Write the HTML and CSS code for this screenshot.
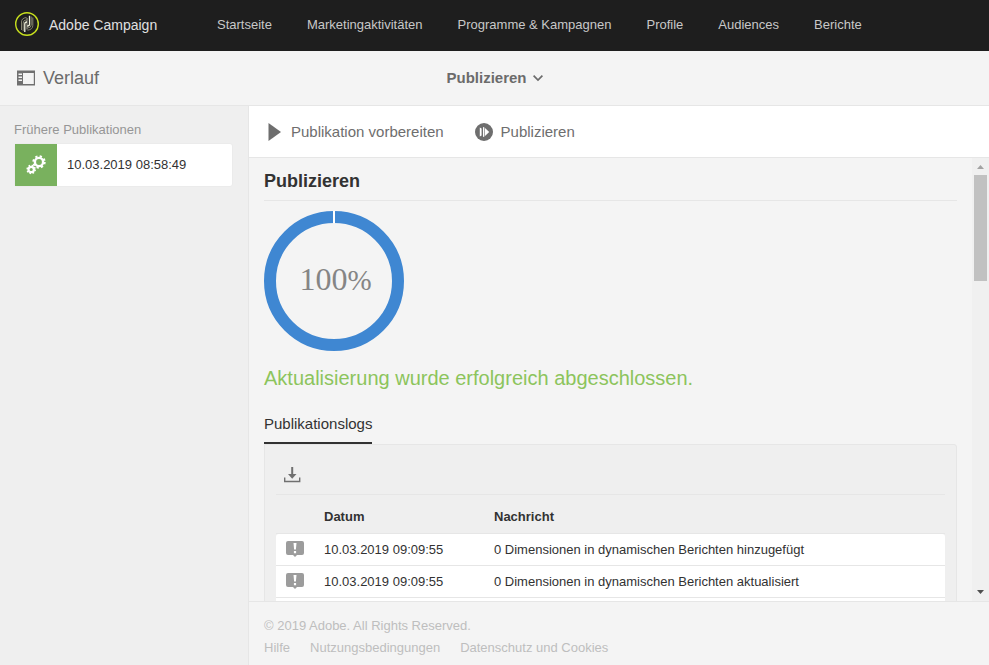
FILE: index.html
```
<!DOCTYPE html>
<html lang="de">
<head>
<meta charset="utf-8">
<title>Adobe Campaign</title>
<link rel="stylesheet" href="styles.css">
</head>
<body>
<header class="topbar">
  <a class="brand" href="#">
    <svg class="logo" viewBox="0 0 24 24" aria-hidden="true">
      <circle cx="12" cy="12" r="11.3" fill="none" stroke="#c8e01e" stroke-width="1.4"/>
      <g fill="none" stroke="#85856f" stroke-width="1">
        <path d="M6.500 18V10Q6.500 6 11.500 5.500M8.200 19V11Q8.200 8 11.500 7.800M17.800 5.500V13.500Q17.800 17.500 12.500 18.200M16.200 4.500V13Q16.200 15.800 12.500 16"/>
        <path d="M12 6V17.500" stroke="#a8a894"/>
      </g>
      <path d="M9.800 20V12Q9.800 10 12 10M14.500 3.800V12.300Q14.500 14 12.200 14" fill="none" stroke="#f2f2dc" stroke-width="1.300"/>
    </svg>
    <span>Adobe Campaign</span>
  </a>
  <nav class="mainnav">
    <a href="#">Startseite</a>
    <a href="#">Marketingaktivitäten</a>
    <a href="#">Programme &amp; Kampagnen</a>
    <a href="#">Profile</a>
    <a href="#">Audiences</a>
    <a href="#">Berichte</a>
  </nav>
</header>

<div class="subbar">
  <button class="history" type="button">
    <svg class="rail-icon" viewBox="0 0 18 16" aria-hidden="true">
      <path fill="#707070" fill-rule="evenodd" d="M0 0.500H18V15.500H0ZM6 3V14H16.800V3ZM1.500 3.500V5H5V3.500ZM1.500 6.500V8H5V6.500ZM1.500 9.500V11H5V9.500Z"/>
    </svg>
    <span>Verlauf</span>
  </button>
  <button class="title-menu" type="button">
    <span>Publizieren</span>
    <svg class="chevron" viewBox="0 0 10 8" aria-hidden="true"><path d="M0.600 1.700L5 6L9.400 1.700" fill="none" stroke="#6b6b6b" stroke-width="1.700"/></svg>
  </button>
</div>

<div class="workspace">
  <aside class="sidebar">
    <h2 class="sidebar-title">Frühere Publikationen</h2>
    <a class="history-card" href="#">
      <span class="history-badge">
        <svg class="gears" viewBox="0 0 20 20" aria-hidden="true">
          <g fill="none" stroke="#fff">
            <circle cx="13" cy="7" r="4.100" stroke-width="2.400"/>
            <circle cx="13" cy="7" r="5.700" stroke-width="2" stroke-dasharray="2.240 2.237"/>
            <circle cx="5.200" cy="14.500" r="2.700" stroke-width="2.200"/>
            <circle cx="5.200" cy="14.500" r="4" stroke-width="1.600" stroke-dasharray="1.570 1.570"/>
          </g>
        </svg>
      </span>
      <span class="history-date">10.03.2019 08:58:49</span>
    </a>
  </aside>

  <section class="main">
    <div class="toolbar">
      <button class="action" type="button">
        <svg class="action-icon" viewBox="0 0 18 18" aria-hidden="true"><path d="M3.500 0L16 9L3.500 18Z" fill="#6e6e6e"/></svg>
        <span>Publikation vorbereiten</span>
      </button>
      <button class="action" type="button">
        <svg class="action-icon" viewBox="0 0 18 18" aria-hidden="true">
          <circle cx="9" cy="9" r="9" fill="#6e6e6e"/>
          <path d="M4.800 4.500L6.600 5.500V12.500L4.800 13.500ZM8 4L9.400 4.500V13.500L8 14ZM10 5L14.200 9L10 13Z" fill="#fff"/>
        </svg>
        <span>Publizieren</span>
      </button>
    </div>

    <div class="scroller">
      <main class="content">
        <h1 class="heading">Publizieren</h1>
        <div class="progress">
          <svg class="ring" viewBox="0 0 140 140" aria-hidden="true">
            <circle cx="70" cy="70" r="64" fill="none" stroke="#3f87d2" stroke-width="12"/>
            <path d="M70 0V12" stroke="#fff" stroke-width="2"/>
          </svg>
          <div class="percent">100<span class="percent-sign">%</span></div>
        </div>
        <p class="success">Aktualisierung wurde erfolgreich abgeschlossen.</p>
        <div class="tabs"><button class="tab" type="button">Publikationslogs</button></div>
        <div class="panel">
          <div class="panel-tools">
            <button class="download" type="button" aria-label="Herunterladen">
              <svg class="download-icon" viewBox="0 0 18 16" aria-hidden="true">
                <path d="M1.700 10.500V14.500H16.700V10.500" fill="none" stroke="#707070" stroke-width="1.400"/>
                <path d="M8.200 0H10.200V7H13.500L9.200 11.800L5 7H8.200Z" fill="#707070"/>
              </svg>
            </button>
          </div>
          <table class="logs">
            <thead>
              <tr><th class="col-icon"></th><th class="col-date">Datum</th><th>Nachricht</th></tr>
            </thead>
            <tbody>
              <tr>
                <td class="col-icon"><svg class="note" viewBox="0 0 18 16" aria-hidden="true"><path d="M2 0H16Q18 0 18 2V12Q18 14 16 14H11L9 16L7 14H2Q0 14 0 12V2Q0 0 2 0Z" fill="#9c9c9c"/><path d="M7.500 2H10.500L9.900 8.500H8.100ZM7.900 10H10.100V12.200H7.900Z" fill="#fff"/></svg></td>
                <td>10.03.2019 09:09:55</td><td>0 Dimensionen in dynamischen Berichten hinzugefügt</td>
              </tr>
              <tr>
                <td class="col-icon"><svg class="note" viewBox="0 0 18 16" aria-hidden="true"><path d="M2 0H16Q18 0 18 2V12Q18 14 16 14H11L9 16L7 14H2Q0 14 0 12V2Q0 0 2 0Z" fill="#9c9c9c"/><path d="M7.500 2H10.500L9.900 8.500H8.100ZM7.900 10H10.100V12.200H7.900Z" fill="#fff"/></svg></td>
                <td>10.03.2019 09:09:55</td><td>0 Dimensionen in dynamischen Berichten aktualisiert</td>
              </tr>
              <tr><td class="col-icon"></td><td></td><td></td></tr>
            </tbody>
          </table>
        </div>
      </main>
      <div class="scrollbar" aria-hidden="true">
        <svg class="arrow" viewBox="0 0 17 17"><path d="M5 11L8.500 7L12 11Z" fill="#a3a3a3"/></svg>
        <div class="track"><div class="thumb"></div></div>
        <svg class="arrow" viewBox="0 0 17 17"><path d="M5 6L8.500 10L12 6Z" fill="#505050"/></svg>
      </div>
    </div>

    <footer class="footer">
      <p>© 2019 Adobe. All Rights Reserved.</p>
      <nav class="footer-links">
        <a href="#">Hilfe</a>
        <a href="#">Nutzungsbedingungen</a>
        <a href="#">Datenschutz und Cookies</a>
      </nav>
    </footer>
  </section>
</div>
</body>
</html>
```
FILE: styles.css
```
* { box-sizing: border-box; }

body {
  margin: 0;
  height: 100vh;
  display: flex;
  flex-direction: column;
  overflow: hidden;
  background: #f4f4f4;
  color: #323232;
  font: 13px/22px "Liberation Sans", Arial, sans-serif;
}

a { color: inherit; text-decoration: none; }
button { margin: 0; padding: 0; border: 0; background: none; color: inherit; font: inherit; cursor: pointer; }
svg { display: block; flex: none; }
h1, h2, p { margin: 0; }

.topbar {
  flex: none;
  display: flex;
  align-items: center;
  height: 51px;
  padding: 0 15px 1px;
  background: #1e1e1e;
  color: #c8c8c8;
}
.brand { display: flex; align-items: center; gap: 10px; width: 202px; color: #e0e0e0; font-size: 14px; }
.logo { width: 24px; height: 24px; margin-bottom: 2px; }
.mainnav { display: flex; gap: 35px; white-space: nowrap; }

.subbar {
  flex: none;
  display: grid;
  grid-template-columns: 1fr auto 1fr;
  align-items: center;
  height: 55px;
  padding: 0 17px;
  border-bottom: 1px solid #e6e6e6;
  color: #6b6b6b;
}
.history { display: flex; align-items: center; gap: 8px; font-size: 18px; }
.rail-icon { width: 18px; height: 16px; }
.title-menu { display: flex; align-items: center; gap: 6px; font-size: 15px; font-weight: bold; }
.chevron { width: 10px; height: 8px; }

.workspace { flex: 1; min-height: 0; display: flex; }

.sidebar {
  flex: none;
  width: 249px;
  padding: 13px 15px 0 14px;
  background: #efefef;
  border-right: 1px solid #e6e6e6;
}
.sidebar-title { color: #969696; font-size: 13px; font-weight: normal; }
.history-card {
  display: flex;
  align-items: center;
  margin-top: 2px;
  background: #fff;
  border: 1px solid #ebebeb;
  border-radius: 3px;
}
.history-badge { display: grid; place-items: center; width: 42px; height: 42px; background: #79b15e; }
.gears { width: 20px; height: 20px; }
.history-date { padding-left: 10px; }

.main { flex: 1; min-width: 0; display: flex; flex-direction: column; }

.toolbar {
  flex: none;
  display: flex;
  align-items: center;
  gap: 31px;
  height: 52px;
  padding: 0 16px;
  background: #fff;
  border-bottom: 1px solid #e6e6e6;
  color: #6e6e6e;
}
.action { display: flex; align-items: center; gap: 8px; font-size: 15px; }
.action-icon { width: 18px; height: 18px; }

.scroller { flex: 1; min-height: 0; display: flex; overflow: hidden; }
.content { flex: 1; min-width: 0; padding: 0 15px; }
.heading { height: 43px; border-bottom: 1px solid #e6e6e6; font-size: 18px; line-height: 46px; }

.progress { display: grid; width: 140px; margin-top: 10px; place-items: center; }
.ring, .percent { grid-area: 1 / 1; }
.ring { width: 140px; height: 140px; }
.percent { padding: 0 0 4px 3px; color: #858585; font: 32px/36px "Liberation Serif", "Times New Roman", serif; }
.percent-sign { font-size: 29px; }

.success { margin-top: 12px; color: #8cc45c; font-size: 20px; line-height: 30px; }

.tabs { display: flex; margin-top: 19px; }
.tab { height: 32px; padding-bottom: 6px; border-bottom: 2px solid #323232; font-size: 15px; }

.panel { padding: 0 11px; background: #efefef; border: 1px solid #e6e6e6; border-radius: 0 3px 0 0; }
.panel-tools { display: flex; align-items: center; height: 50px; padding: 10px 7px 0; border-bottom: 1px solid #e6e6e6; }
.download-icon { width: 18px; height: 16px; }

.logs { width: 100%; border-spacing: 0; table-layout: fixed; }
.logs th, .logs td { padding: 0; text-align: left; }
.logs th { height: 39px; padding-top: 5px; border-bottom: 1px solid #e6e6e6; }
.logs td { height: 32px; background: #fff; border-bottom: 1px solid #e6e6e6; }
.logs .col-icon { width: 48px; padding-left: 10px; }
.logs .col-date { width: 170px; }
.logs tbody tr:first-child td:first-child { border-top-left-radius: 3px; }
.logs tbody tr:first-child td:last-child { border-top-right-radius: 3px; }
.note { width: 18px; height: 16px; margin-bottom: 2px; }

.scrollbar { flex: none; display: flex; flex-direction: column; width: 17px; background: #f0f0f0; }
.arrow { width: 17px; height: 17px; }
.track { flex: 1; padding: 0 2px; }
.thumb { height: 26%; background: #c1c1c1; }

.footer { flex: none; padding: 13px 15px 6px; border-top: 1px solid #e6e6e6; color: #bebebe; }
.footer-links { display: flex; gap: 20px; }
```
